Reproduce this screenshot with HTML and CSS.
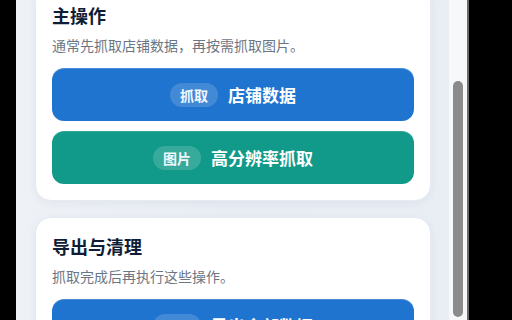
FILE: index.html
```html
<!DOCTYPE html>
<html lang="zh-CN">
<head>
<meta charset="utf-8">
<title>操作面板</title>
<link rel="stylesheet" href="styles.css">
</head>
<body>
<div class="frame">
  <div class="edge"></div>
  <main class="page">
    <div class="stack">
      <section class="card">
        <h2 class="card-title">主操作</h2>
        <p class="card-sub">通常先抓取店铺数据，再按需抓取图片。</p>
        <div class="actions">
          <button class="btn btn-blue"><span class="pill">抓取</span><span class="label">店铺数据</span></button>
          <button class="btn btn-teal"><span class="pill">图片</span><span class="label">高分辨率抓取</span></button>
        </div>
      </section>
      <section class="card">
        <h2 class="card-title">导出与清理</h2>
        <p class="card-sub">抓取完成后再执行这些操作。</p>
        <div class="actions">
          <button class="btn btn-blue"><span class="pill">导出</span><span class="label">导出全部数据</span></button>
          <button class="btn btn-teal"><span class="pill">清理</span><span class="label">清空缓存数据</span></button>
        </div>
      </section>
    </div>
  </main>
  <div class="scrollbar"><div class="thumb"></div></div>
  <div class="divider"></div>
  <div class="outside"></div>
</div>
</body>
</html>
```
FILE: styles.css
```css
* { box-sizing: border-box; }
html, body { margin: 0; padding: 0; }
body {
  background: #000;
  font-family: "Noto Sans CJK SC", "Noto Sans", sans-serif;
  width: 512px;
  height: 320px;
  overflow: hidden;
}
.frame {
  display: flex;
  height: 320px;
}
.edge { width: 16px; flex: none; background: #000; }
.page {
  width: 433px;
  flex: none;
  background: linear-gradient(90deg, #eef1f6 0%, #e8edf4 50%, #e9eef5 100%);
  overflow: hidden;
  padding: 0 18px 0 19px;
}
.stack {
  display: flex;
  flex-direction: column;
  gap: 16px;
  margin-top: -14px;
}
.card {
  background: #fff;
  border: 1px solid #e6ebf2;
  border-radius: 16px;
  padding: 16px;
  box-shadow: 0 2px 8px rgba(30, 50, 90, 0.06);
}
.card-title {
  margin: 0;
  font-size: 18px;
  line-height: 24px;
  font-weight: 700;
  color: #0f1d36;
}
.card-sub {
  margin: 8px 0 13px;
  font-size: 14px;
  line-height: 20px;
  color: #6b7684;
}
.actions {
  display: flex;
  flex-direction: column;
  gap: 10px;
}
.btn {
  display: flex;
  align-items: center;
  justify-content: center;
  gap: 10px;
  height: 53px;
  width: 100%;
  border: none;
  border-radius: 12px;
  font-family: inherit;
  color: #fff;
  cursor: pointer;
  padding: 0;
}
.btn-blue { background: #1f74cf; box-shadow: inset 0 1px 0 rgba(255,255,255,0.18); }
.btn-teal { background: #119a8a; box-shadow: inset 0 1px 0 rgba(255,255,255,0.15); }
.pill {
  display: inline-flex;
  align-items: center;
  height: 24px;
  padding: 0 10px;
  border-radius: 12px;
  background: rgba(255, 255, 255, 0.16);
  font-size: 14px;
  font-weight: 700;
  line-height: 24px;
  color: #f2f7fd;
}
.label {
  font-size: 17px;
  font-weight: 700;
  line-height: 24px;
}
.scrollbar {
  width: 18px;
  flex: none;
  background: #f7f8fa;
  display: flex;
  justify-content: center;
  padding-top: 81px;
}
.thumb {
  width: 10px;
  height: 236px;
  border-radius: 5px;
  background: #8b8b8b;
}
.divider { width: 2px; flex: none; background: #6a6a6a; }
.outside { flex: 1; background: #000; }
```
